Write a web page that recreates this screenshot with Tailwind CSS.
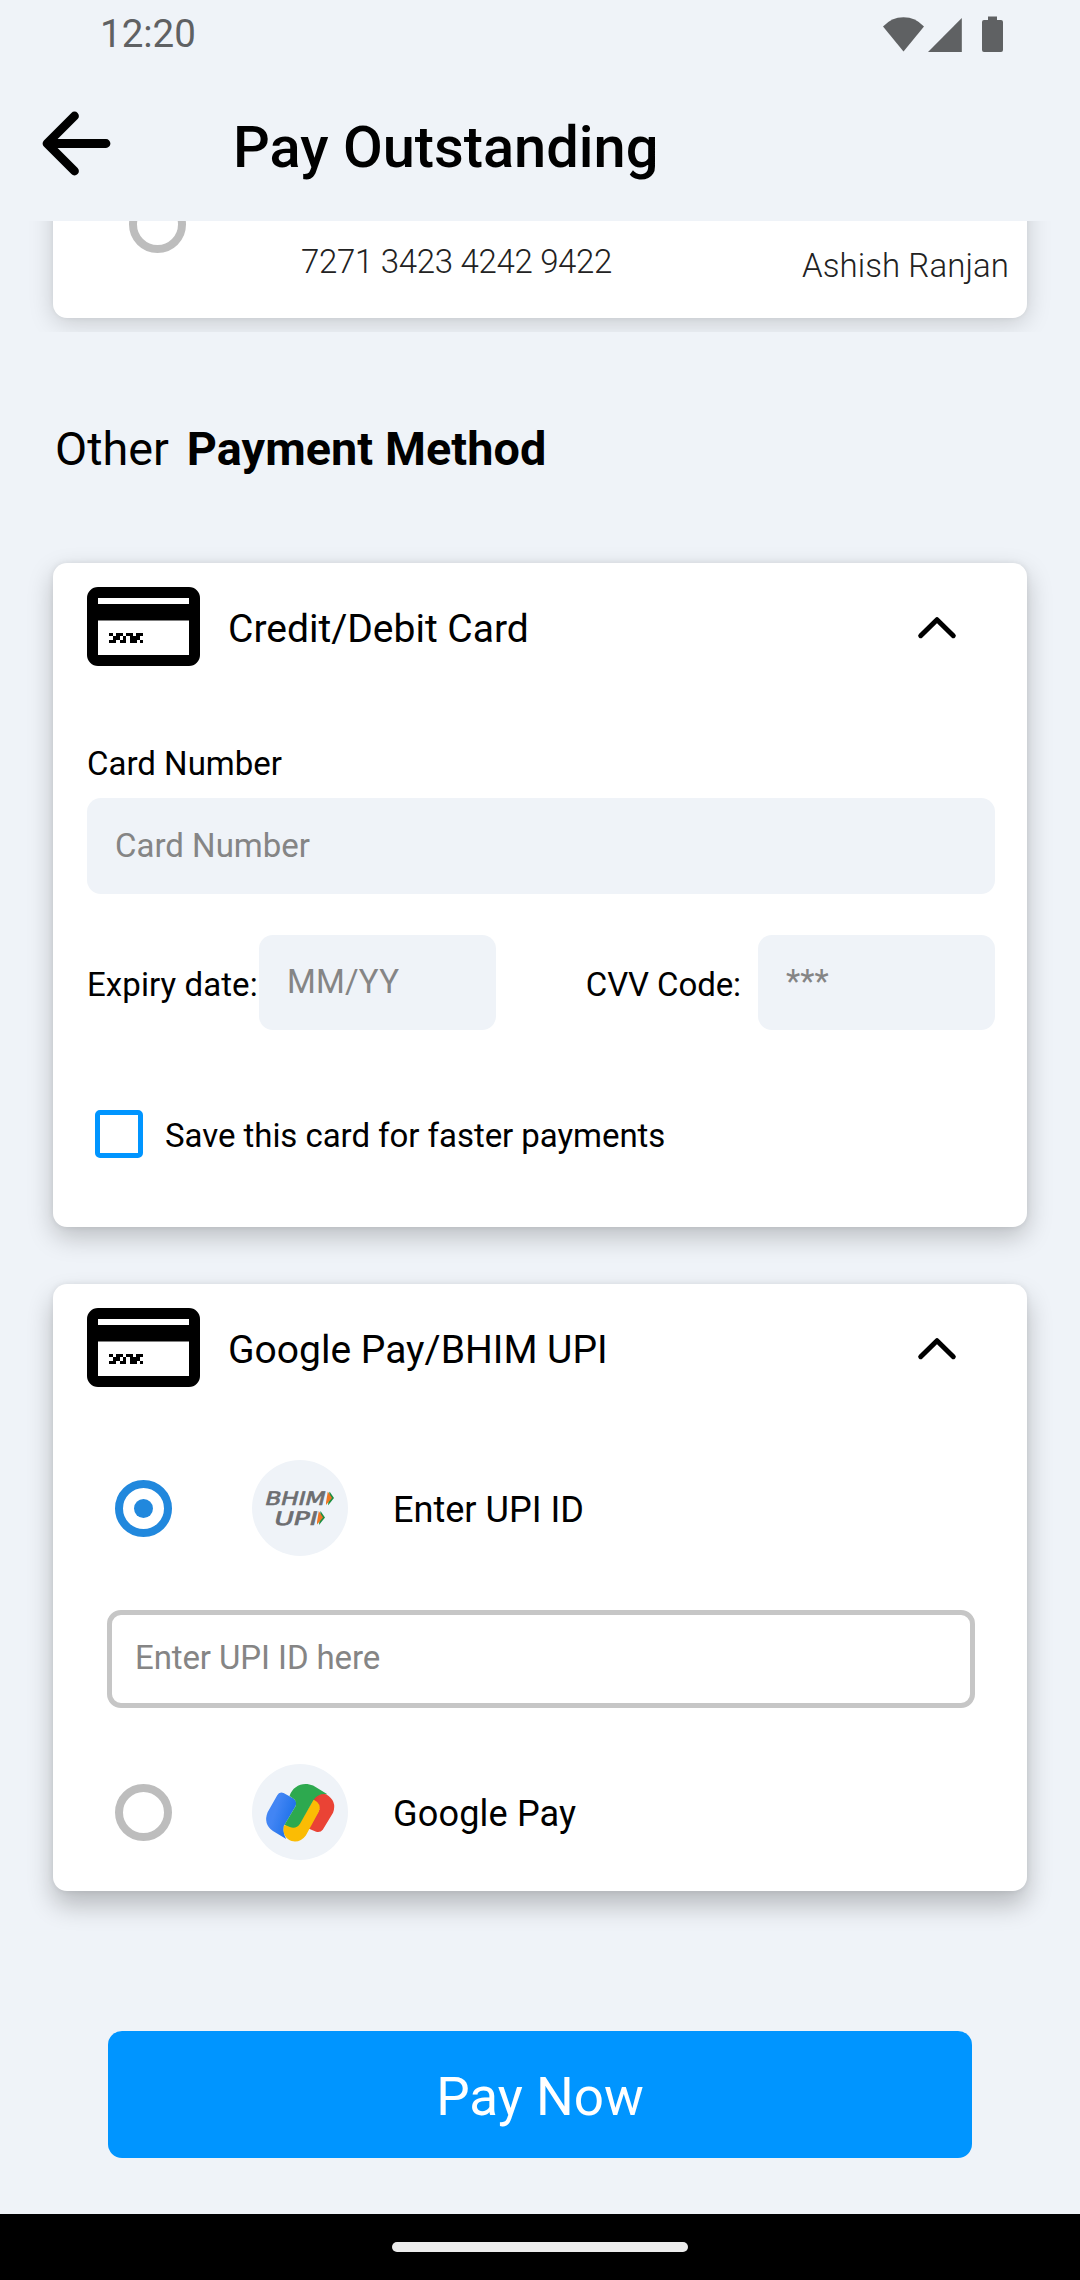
<!DOCTYPE html>
<html lang="en">
<head>
<meta charset="utf-8">
<title>Pay Outstanding</title>
<script src="https://cdn.jsdelivr.net/npm/@tailwindcss/browser@4"></script>
</head>
<body class="w-[1080px] h-[2280px] overflow-hidden bg-[#eff3f8] text-black font-['Roboto',sans-serif] flex flex-col">

<!-- Shared symbols -->
<svg class="hidden">
  <symbol id="card" viewBox="0 0 113 79">
    <path fill-rule="evenodd" d="M11 0H102A11 11 0 0 1 113 11V68A11 11 0 0 1 102 79H11A11 11 0 0 1 0 68V11A11 11 0 0 1 11 0ZM11 11V17H102V11ZM11 33.5V68H102V33.5Z"/>
    <path shape-rendering="crispEdges" d="M22 46h4v3h-4zM29 46h7v3h-7zM39 46h7v3h-7zM49 46h7v3h-7zM26 49h7v4h-7zM36 49h3v4h-3zM43 49h10v4h-10zM22 53h7v3h-7zM33 53h6v3h-6zM43 53h7v3h-7zM53 53h3v3h-3z"/>
  </symbol>
  <symbol id="up" viewBox="0 0 40 24">
    <path d="M3.7 19.7L20 3.7L36.3 19.7" fill="none" stroke="#000" stroke-width="5" stroke-linecap="round" stroke-linejoin="round"/>
  </symbol>
  <symbol id="tip" viewBox="0 0 8 14">
    <path d="M3.5 0L8 6.5L2 14Z" fill="#1a8f43"/>
    <path d="M1.8 0L6 6.5L-0.5 14Z" fill="#ee7623"/>
  </symbol>
</svg>

<!-- Status bar -->
<div class="h-[68px] shrink-0 flex items-center pl-[100px] pr-[76px] text-[#5f6163]">
  <span class="text-[38.5px] leading-none grow">12:20</span>
  <svg class="w-[121px] h-[40px]" viewBox="0 0 121 40" fill="#5f6163">
    <path d="M0 12.5Q8.500 3.200 20.500 3.200Q32.500 3.200 41 12.500L20.500 37.500Z"/>
    <path d="M45 38L78.800 4V38Z"/>
    <path d="M105 2.500H114V6H118Q120 6 120 8V36Q120 38 118 38H101Q99 38 99 36V8Q99 6 101 6H105Z"/>
  </svg>
</div>

<!-- App bar -->
<header class="h-[153px] shrink-0 flex items-start pl-[41px]">
  <svg class="w-[72px] h-[66px] mt-[42px]" viewBox="0 0 72 66" fill="none" stroke="#000" stroke-width="8.8" stroke-linecap="round" stroke-linejoin="round">
    <path d="M6 33.500H65M33.500 6L6 33.500L33.500 61"/>
  </svg>
  <h1 class="ml-[120px] mt-[49px] text-[57.75px] leading-[60px] font-medium">Pay Outstanding</h1>
</header>

<!-- Scrolled saved-card list -->
<section class="h-[111px] shrink-0 overflow-hidden px-[53px] flex items-end pb-[14px]">
  <div class="w-full h-[220px] shrink-0 rounded-[14px] bg-white shadow-[0_5px_24px_rgba(0,0,0,0.17),0_0_5px_rgba(0,0,0,0.06)] flex items-end">
    <div class="ml-[76px] mb-[65px] size-[57px] rounded-full border-[8.5px] border-[#bdbdbd]"></div>
    <div class="ml-[115px] mb-[36px] text-[33px] tracking-[-0.31px] leading-[40px] font-light text-[#222]">7271 3423 4242 9422</div>
    <div class="ml-auto mr-[18px] mb-[32px] text-[33px] tracking-[0.08px] leading-[40px] font-light text-[#222]">Ashish Ranjan</div>
  </div>
</section>

<h2 class="mt-[87px] h-[60px] shrink-0 pl-[55px] flex gap-[18px] text-[46.75px] leading-[60px]">
  <span>Other</span><span class="font-bold tracking-[0.08px]">Payment Method</span>
</h2>

<!-- Credit / debit card -->
<section class="mt-[84px] mx-[53px] h-[664px] shrink-0 rounded-[14px] bg-white shadow-[0_10px_26px_rgba(0,0,0,0.22),0_0_6px_rgba(0,0,0,0.08)] flex flex-col pl-[34px] pr-[32px]">
  <div class="mt-[24px] h-[79px] flex items-center">
    <svg class="w-[113px] h-[79px]"><use href="#card"/></svg>
    <span class="ml-[28px] pt-[6px] text-[39px] leading-none grow">Credit/Debit Card</span>
    <svg class="w-[40px] h-[24px] mr-[38px] mt-[2px]"><use href="#up"/></svg>
  </div>
  <label class="mt-[78px] self-start text-[33px] leading-[40px]">Card Number</label>
  <div class="mt-[14px] h-[96px] rounded-[14px] bg-[#eff3f8] flex items-center px-[28px] text-[33px] text-[#858585]"><span>Card Number</span></div>
  <div class="mt-[41px] h-[95px] flex items-center text-[33px]">
    <label class="w-[172px] pt-[5px] tracking-[0.08px] whitespace-nowrap">Expiry date:</label>
    <div class="w-[237px] h-full rounded-[14px] bg-[#eff3f8] flex items-center px-[28px] pb-[2px] text-[#858585] tracking-[0.2px]"><span>MM/YY</span></div>
    <label class="ml-auto pt-[5px] tracking-[-0.1px]">CVV Code:</label>
    <div class="ml-[17px] w-[237px] h-full rounded-[14px] bg-[#eff3f8] flex items-center px-[28px] pb-[2px] text-[#858585]"><span>***</span></div>
  </div>
  <div class="mt-[80px] h-[48px] flex items-center pl-[8px] text-[33px]">
    <span class="size-[48px] rounded-[5px] border-[5px] border-[#0095ff]"></span>
    <span class="ml-[22px] pt-[3px] tracking-[-0.05px]">Save this card for faster payments</span>
  </div>
</section>

<!-- Google Pay / UPI -->
<section class="mt-[57px] mx-[53px] h-[607px] shrink-0 rounded-[14px] bg-white shadow-[0_14px_26px_rgba(0,0,0,0.24),0_0_6px_rgba(0,0,0,0.08)] flex flex-col pl-[34px] pr-[32px]">
  <div class="mt-[24px] h-[79px] flex items-center">
    <svg class="w-[113px] h-[79px]"><use href="#card"/></svg>
    <span class="ml-[28px] pt-[6px] text-[39px] leading-none grow">Google Pay/BHIM UPI</span>
    <svg class="w-[40px] h-[24px] mr-[38px] mt-[2px]"><use href="#up"/></svg>
  </div>
  <div class="mt-[72px] h-[98px] flex items-center pl-[28px]">
    <span class="size-[57px] rounded-full border-[8.5px] border-[#2188dd] flex items-center justify-center"><span class="size-[19px] rounded-full bg-[#2188dd]"></span></span>
    <svg class="ml-[80px] size-[96px]" viewBox="0 0 96 96">
      <circle cx="48" cy="48" r="48" fill="#eff3f8"/>
      <g fill="#6d6e71" stroke="#6d6e71" stroke-width="0.7" font-family="DejaVu Sans" font-size="18.500">
        <text transform="translate(12 45) skewX(-14)" textLength="60" lengthAdjust="spacingAndGlyphs">BHIM</text>
        <text transform="translate(21 64.500) skewX(-14)" textLength="43" lengthAdjust="spacingAndGlyphs">UPI</text>
      </g>
      <use href="#tip" x="74" y="31.500" width="8" height="14"/>
      <use href="#tip" x="65" y="51" width="8" height="14"/>
    </svg>
    <span class="ml-[45px] pt-[5px] text-[36.1px] leading-none">Enter UPI ID</span>
  </div>
  <div class="mt-[53px] ml-[20px] mr-[20px] h-[98px] rounded-[14px] border-[5.5px] border-[#c6c6c6] flex items-center pl-[23px] pb-[2px] text-[33px] tracking-[-0.1px] text-[#858585]"><span>Enter UPI ID here</span></div>
  <div class="mt-[55px] h-[98px] flex items-center pl-[28px]">
    <span class="size-[57px] rounded-full border-[8.5px] border-[#bdbdbd]"></span>
    <svg class="ml-[80px] size-[96px]" viewBox="35 39 289 289">
      <defs><linearGradient id="b" x1="0" y1="0" x2="1" y2=".5"><stop offset=".4" stop-color="#4285f4"/><stop offset="1" stop-color="#1a6fe8"/></linearGradient>
      <linearGradient id="r" x1="0" y1="0" x2=".6" y2=".4"><stop offset="0" stop-color="#cf2f27"/><stop offset=".6" stop-color="#ea4335"/></linearGradient></defs>
      <circle cx="179.500" cy="183.500" r="144.500" fill="#eff3f8"/>
      <path fill="url(#b)" d="M111 133Q117 121 130 126L160 143Q172 151 166 166L131 226Q128 248 138 265L98 241Q68 219 82 184Z"/>
      <path fill="url(#r)" d="M214 148Q232 124 258 130Q292 150 279 186L248 237Q241 246 228 243L205 233L238 176Z"/>
      <path fill="#fbbc04" d="M220 146Q247 160 236 183L197 254Q180 277 154 271Q124 258 131 224L180 215Z"/>
      <path fill="#2da94f" d="M148 135C158 104 190 91 219 104L262 130Q236 125 220 147L180 218Q168 236 149 229L133 222L166 166Q171 149 158 142Z"/>
    </svg>
    <span class="ml-[45px] pt-[5px] text-[36.1px] tracking-[0.15px] leading-none">Google Pay</span>
  </div>
</section>

<button class="mt-[140px] mx-[108px] h-[127px] shrink-0 rounded-[14px] bg-[#0095ff] text-white text-[53px] leading-none pt-[5px] flex items-center justify-center">Pay Now</button>

<!-- Gesture navigation bar -->
<div class="mt-auto h-[66px] shrink-0 bg-black flex items-center justify-center">
  <div class="w-[296px] h-[10px] rounded-full bg-[#ececec]"></div>
</div>
</body>
</html>
